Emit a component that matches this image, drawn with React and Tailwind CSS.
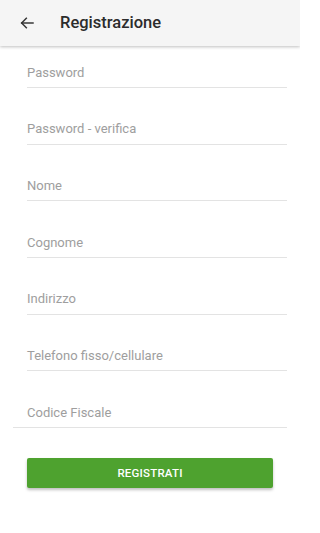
import React from 'react';

const fields = [
  'Password',
  'Password - verifica',
  'Nome',
  'Cognome',
  'Indirizzo',
  'Telefono fisso/cellulare',
];

const Field = ({ label, wide }) => (
  <div className={`h-[31px] flex items-center border-b border-[#e3e3e3] mr-[13px] ${wide ? 'ml-[13px] pl-[14px]' : 'ml-[27px]'}`}>
    <span className="text-[13px] text-[#9e9e9e] leading-none">{label}</span>
  </div>
);

export default function App() {
  return (
    <div className="w-[300px] h-[533px] bg-white overflow-hidden" style={{ fontFamily: 'Roboto, "Liberation Sans", sans-serif' }}>
      {/* Header */}
      <div className="h-[46px] bg-[#f5f5f5] flex items-center shadow-[0_1px_3px_rgba(0,0,0,0.25)] relative z-10">
        <svg className="ml-[19px] w-[16px] h-[16px]" viewBox="0 0 24 24" fill="none" stroke="#333" strokeWidth="2.2" strokeLinecap="square">
          <path d="M21 12H4" />
          <path d="M11 5l-7 7 7 7" />
        </svg>
        <h1 className="ml-[25px] text-[16.5px] font-medium text-[#2c2c2c]">Registrazione</h1>
      </div>

      {/* Form */}
      <div className="pt-[11px] flex flex-col gap-[25.7px]">
        {fields.map((f) => (
          <Field key={f} label={f} />
        ))}
        <Field label="Codice Fiscale" wide />
      </div>

      <div className="px-[27px] mt-[30px]">
        <button className="w-full h-[30px] bg-[#4ea22f] rounded-[2px] shadow-[0_2px_3px_rgba(0,0,0,0.25)] text-white text-[11.5px] font-medium tracking-[0.2px]">
          REGISTRATI
        </button>
      </div>
    </div>
  );
}
